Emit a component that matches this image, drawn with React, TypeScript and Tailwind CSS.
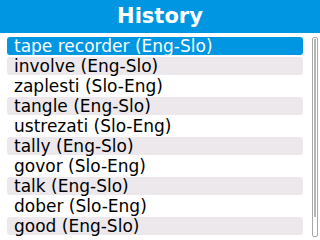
const items = [
  "tape recorder (Eng-Slo)",
  "involve (Eng-Slo)",
  "zaplesti (Slo-Eng)",
  "tangle (Eng-Slo)",
  "ustrezati (Slo-Eng)",
  "tally (Eng-Slo)",
  "govor (Slo-Eng)",
  "talk (Eng-Slo)",
  "dober (Slo-Eng)",
  "good (Eng-Slo)",
];

export default function App() {
  return (
    <div className="w-[320px] h-[240px] bg-white overflow-hidden flex flex-col" style={{ fontFamily: '"DejaVu Sans", Verdana, sans-serif' }}>
      {/* header */}
      <div className="h-[33px] bg-[#0096e1] flex items-center justify-center">
        <span className="text-white font-bold text-[21px] leading-none">History</span>
      </div>

      <div className="flex pt-[4px] pl-[7px]">
        <div className="w-[296px] flex flex-col gap-[2px]">
          {items.map((item, i) => (
            <div
              key={item}
              className={
                i === 0
                  ? "h-[18px] rounded-[3px] bg-[#0096e1] text-white pl-[7px] flex items-center text-[17px] leading-none"
                  : i % 2 === 1
                  ? "h-[18px] rounded-[3px] bg-[#ece8ec] text-black pl-[7px] flex items-center text-[17px] leading-none"
                  : "h-[18px] rounded-[3px] text-black pl-[7px] flex items-center text-[17px] leading-none"
              }
            >
              {item}
            </div>
          ))}
        </div>

        {/* scrollbar */}
        <div className="ml-[9px] w-[6px] h-[200px] border border-[#a8a8a8] rounded-[2px] p-[1px] flex flex-col">
          <div className="h-[178px] bg-[#b4b4b4]"></div>
        </div>
      </div>
    </div>
  );
}
